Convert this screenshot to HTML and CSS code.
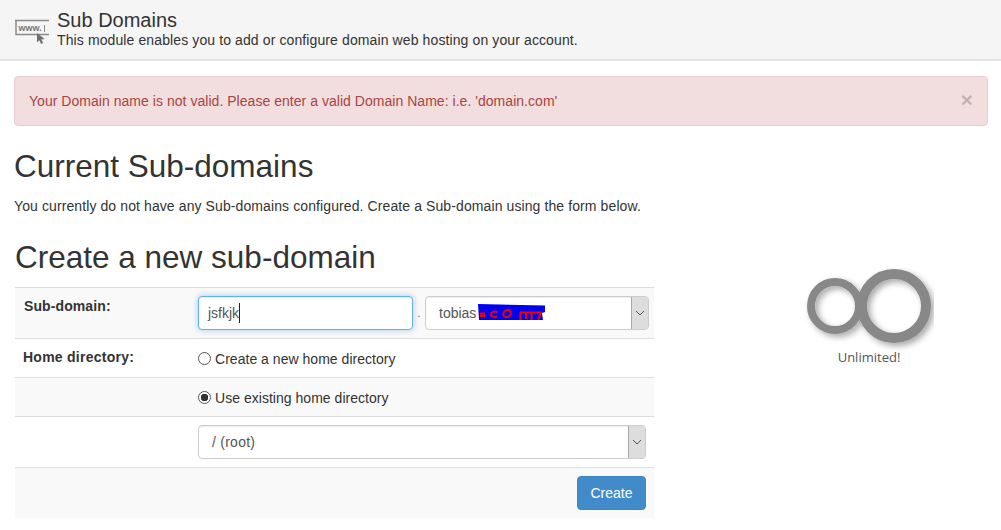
FILE: index.html
```html
<!DOCTYPE html>
<html lang="en">
<head>
<meta charset="utf-8">
<title>Sub Domains</title>
<link rel="stylesheet" href="styles.css">
</head>
<body>
<header class="module-head">
  <svg class="module-icon" width="34" height="25" viewBox="0 0 34 25">
    <path d="M0 1.500H34M1 1.500V15.500H34" fill="none" stroke="#8a8a8a" stroke-width="1.500"/>
    <path d="M29.500 6V13" fill="none" stroke="#8a8a8a" stroke-width="1"/>
    <text x="3.500" y="12" class="www">www.</text>
    <path d="M22 14l0 9.500 2.300-2.300 1.900 3.800 2-1-1.900-3.600 3.400-.4z" fill="#6f6f6f"/>
  </svg>
  <div class="module-text">
    <h1>Sub Domains</h1>
    <p>This module enables you to add or configure domain web hosting on your account.</p>
  </div>
</header>
<main class="content">
  <div class="alert">
    <span>Your Domain name is not valid. Please enter a valid Domain Name: i.e. 'domain.com'</span>
    <span class="close">×</span>
  </div>
  <h2 class="current">Current Sub-domains</h2>
  <p class="note">You currently do not have any Sub-domains configured. Create a Sub-domain using the form below.</p>
  <div class="columns">
    <section class="form-col">
      <h2 class="create">Create a new sub-domain</h2>
      <div class="form-table">
        <div class="row shaded r1">
          <div class="label top">Sub-domain:</div>
          <div class="cell">
            <div class="field focus"><span class="typed">jsfkjk</span></div>
            <span class="dot">.</span>
            <div class="select domain">
              <span class="value">tobias</span>
              <svg class="scribble" width="70" height="20" viewBox="0 0 70 20">
                <path d="M1 1L68 2.500V9L65 10L66 17L2 17Z" fill="#0000f0"/>
                <path d="M4 10.500h3v2.500H4zM21 9c-4-1-7 0-7 2.500s3 2.500 6 2M31 7c-4 0-5 3-4.500 5.500s6 2 7-1-1-5-2.500-4.500M43.500 17V9.500h11V17M49 9.500V16M55 9.500h9l-3 7" fill="none" stroke="#f00000" stroke-width="2"/>
              </svg>
              <span class="arrow"><svg width="10" height="6" viewBox="0 0 10 6"><path d="M1 1l4 4 4-4" fill="none" stroke="#555" stroke-width="1"/></svg></span>
            </div>
          </div>
        </div>
        <div class="row r2">
          <div class="label raised">Home directory:</div>
          <div class="cell"><span class="radio"></span><span class="radio-label">Create a new home directory</span></div>
        </div>
        <div class="row shaded r2">
          <div class="label"></div>
          <div class="cell"><span class="radio on"></span><span class="radio-label">Use existing home directory</span></div>
        </div>
        <div class="row r1">
          <div class="label"></div>
          <div class="cell">
            <div class="select root">
              <span class="value">/ (root)</span>
              <span class="arrow"><svg width="10" height="6" viewBox="0 0 10 6"><path d="M1 1l4 4 4-4" fill="none" stroke="#555" stroke-width="1"/></svg></span>
            </div>
          </div>
        </div>
        <div class="row shaded foot">
          <button class="btn" type="button">Create</button>
        </div>
      </div>
    </section>
    <aside class="usage">
      <svg class="infinity" width="130" height="90" viewBox="0 0 130 90">
        <defs>
          <filter id="sh" x="-20%" y="-20%" width="150%" height="150%">
            <feDropShadow dx="3" dy="3" stdDeviation="3" flood-color="#000" flood-opacity=".35"/>
          </filter>
        </defs>
        <g filter="url(#sh)" fill="none" stroke="#888">
          <circle cx="31" cy="38" r="24" stroke-width="8"/>
          <circle cx="90" cy="38" r="32" stroke-width="10"/>
        </g>
      </svg>
      <div class="usage-label">Unlimited!</div>
    </aside>
  </div>
</main>
</body>
</html>
```
FILE: styles.css
```css
* { box-sizing: border-box; }
html, body { margin: 0; padding: 0; }
body {
  width: 1001px;
  height: 530px;
  overflow: hidden;
  background: #fff;
  color: #333;
  font-family: "Liberation Sans", Arial, sans-serif;
  font-size: 14px;
  line-height: 20px;
}
.module-head {
  display: flex;
  height: 61px;
  padding: 7px 15px 0;
  background: #f5f5f5;
  border-bottom: 2px solid #e4e4e4;
}
.module-icon { margin: 12px 8px 0 0; flex: none; }
.www { font: bold 9px "Liberation Sans", sans-serif; fill: #777; }
.module-text h1 {
  margin: 0;
  font-size: 20px;
  font-weight: 400;
  line-height: 26px;
}
.module-text p { margin: 0; line-height: 15px; letter-spacing: .11px; }
.content { padding: 15px 13px 0 14px; }
.alert {
  display: flex;
  justify-content: space-between;
  align-items: center;
  height: 50px;
  padding: 0 14px;
  background: #f2dede;
  border: 1px solid #ebccd1;
  border-radius: 4px;
  color: #a94442;
  letter-spacing: .035px;
}
.close {
  font-size: 21px;
  font-weight: 700;
  color: #000;
  opacity: .2;
  margin-top: -3px;
}
.current {
  margin: 24px 0 0;
  font-size: 31.500px;
  font-weight: 400;
  line-height: 33px;
}
.note { margin: 13px 0 0; line-height: 20px; letter-spacing: .1px; }
.columns { display: flex; margin-top: 21px; }
.form-col { width: 639px; margin-left: 1px; flex: none; }
.create {
  margin: 0 0 10px;
  font-size: 31.500px;
  font-weight: 400;
  line-height: 40px;
}
.form-table { border-top: 1px solid #ddd; }
.row { display: flex; align-items: center; border-bottom: 1px solid #ddd; }
.row.shaded { background: #f9f9f9; }
.r1 { height: 51px; }
.r2 { height: 39px; }
.r2 .cell { padding-top: 2px; }
.foot { height: 50px; border-bottom: 0; justify-content: flex-end; padding: 0 8px 1px 0; }
.label {
  width: 183px;
  flex: none;
  padding-left: 8px;
  font-weight: 700;
  letter-spacing: .25px;
}
.label.raised { margin-bottom: 2px; }
.label.top { align-self: flex-start; padding: 8px 0 0 9px; letter-spacing: .1px; }
.cell { display: flex; align-items: center; flex: 1; }
.field {
  width: 215px;
  height: 34px;
  padding: 6px 9px;
  background: #fff;
  border: 1px solid #66afe9;
  border-radius: 4px;
  box-shadow: inset 0 1px 1px rgba(0,0,0,.075), 0 0 6px rgba(102,175,233,.6);
  color: #555;
}
.typed { border-right: 1px solid #222; display: inline-block; height: 20px; }
.dot { width: 12px; text-align: center; color: #777; font-size: 12px; }
.select {
  position: relative;
  display: flex;
  align-items: center;
  height: 34px;
  padding-left: 13px;
  background: #fff;
  border: 1px solid #ccc;
  border-radius: 4px;
  box-shadow: inset 0 1px 1px rgba(0,0,0,.075);
  color: #555;
}
.domain { width: 224px; }
.root { width: 448px; }
.root .value { letter-spacing: .25px; }
.value { flex: 1; }
.scribble { position: absolute; left: 51px; top: 6px; }
.arrow {
  display: flex;
  align-items: center;
  justify-content: center;
  width: 17px;
  height: 32px;
  background: #ddd;
  border-left: 1px solid #a8a8a8;
  border-radius: 0 3px 3px 0;
}
.radio {
  width: 13px;
  height: 13px;
  flex: none;
  margin-bottom: 2px;
  background: #fff;
  border: 1px solid #555;
  border-radius: 50%;
}
.radio.on { background: radial-gradient(circle, #333 0 3.500px, #fff 4px); }
.radio-label { margin-left: 4px; letter-spacing: .03px; }
.btn {
  width: 69px;
  height: 34px;
  padding: 0;
  background: #428bca;
  border: 1px solid #3f86c3;
  border-radius: 4px;
  color: #fff;
  font: 14px/20px "Liberation Sans", Arial, sans-serif;
}
.usage { width: 220px; margin-left: 130px; padding-top: 31px; }
.infinity { display: block; margin-left: 20px; }
.usage-label {
  margin-top: -11px;
  margin-left: 45px;
  width: 80px;
  text-align: center;
  font: 13px/20px "Open Sans", sans-serif;
  color: #555;
}
```
